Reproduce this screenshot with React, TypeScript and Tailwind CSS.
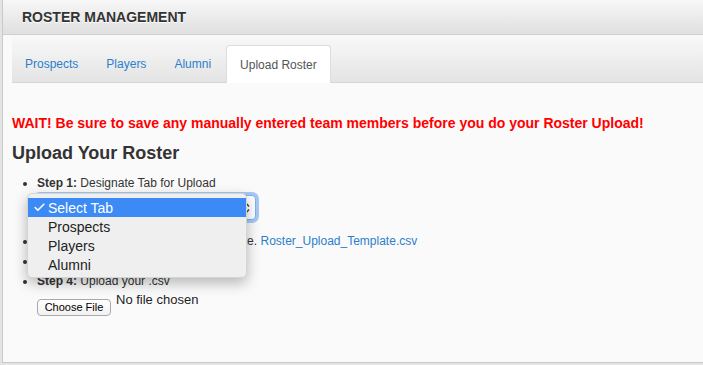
import { Check } from "lucide-react";

const tabs = ["Prospects", "Players", "Alumni", "Upload Roster"];
const options = ["Select Tab", "Prospects", "Players", "Alumni"];

function TabBar() {
  return (
    <div className="ml-[9px] flex h-[48px] items-end border-b border-[#d6d6d6] bg-gradient-to-b from-[#f9f9f9] to-[#e4e4e4] pl-0">
      {tabs.map((tab) => {
        const active = tab === "Upload Roster";
        return (
          <div
            key={tab}
            className={
              active
                ? "-mb-px mr-[2px] flex h-[38px] items-center rounded-t-[4px] border border-b-0 border-[#dddddd] bg-white px-[13px] text-[12px] text-[#555555]"
                : "mr-[2px] flex h-[37px] items-center px-[13px] text-[12px] text-[#2a7fcc]"
            }
          >
            {tab}
          </div>
        );
      })}
    </div>
  );
}

function SelectPopup() {
  return (
    <div className="relative ml-[-1px] h-[29px] w-[220px]">
      <div className="absolute inset-x-0 top-[2px] h-[25px] rounded-[4px] border border-[#7fb2f0] bg-white shadow-[0_0_0_3px_rgba(95,160,240,0.55)]">
        <svg className="absolute right-[5px] top-[6px]" width="7" height="12" viewBox="0 0 7 12">
          <path d="M1 4.5 L3.5 1.5 L6 4.5 M1 7.5 L3.5 10.5 L6 7.5" fill="none" stroke="#444" strokeWidth="1.4" />
        </svg>
      </div>
      <div className="absolute left-[-9px] top-0 z-10 w-[220px] rounded-[5px] border border-[#d4d4d4] bg-[#efefef] pb-[3px] pt-[4px] text-[14px] shadow-[0_5px_14px_rgba(0,0,0,0.28)]">
        {options.map((opt, i) => (
          <div
            key={opt}
            className={
              i === 0
                ? "flex h-[19px] items-center bg-[#3b8af5] text-white"
                : "flex h-[19px] items-center text-[#222222]"
            }
          >
            <span className="flex w-[20px] justify-end pr-[2px]">
              {i === 0 && <Check size={13} strokeWidth={3} />}
            </span>
            <span>{opt}</span>
          </div>
        ))}
      </div>
    </div>
  );
}

export default function App() {
  return (
    <div className="h-[365px] w-[703px] overflow-hidden bg-[#e4e4e4] pl-[2px] font-['Liberation_Sans',Arial,sans-serif]">
      <div className="h-[363px] border-b border-l border-[#c9c9c9] bg-[#fafafa]">
        <div className="flex h-[35px] items-center border-b border-[#cfcfcf] bg-gradient-to-b from-[#f7f7f7] to-[#e0e0e0] pl-[19px] text-[14px] font-bold text-[#333333] [text-shadow:0_1px_0_#fff]">
          ROSTER MANAGEMENT
        </div>

        <TabBar />

        <div className="pl-[9px]">
          <p className="mt-[30px] text-[14px] font-bold leading-[20px] text-[#ff0000]">
            WAIT! Be sure to save any manually entered team members before you do your Roster Upload!
          </p>
          <h2 className="mt-[9px] text-[18px] font-bold leading-[22px] text-[#333333]">
            Upload Your Roster
          </h2>

          <ul className="mt-[9px] list-disc pl-[25px] text-[12px] leading-[20px] text-[#333333]">
            <li>
              <b>Step 1:</b> Designate Tab for Upload
              <div className="mb-[9px]">
                <SelectPopup />
              </div>
            </li>
            <li>
              <b>Step 2:</b> Download and fill in the template.{" "}
              <a className="text-[#2a7fcc]">Roster_Upload_Template.csv</a>
            </li>
            <li>
              <b>Step 3:</b> Enter your team
            </li>
            <li>
              <b>Step 4:</b> Upload your .csv
              <div className="mt-px flex items-start">
                <button className="mt-[7px] h-[17px] w-[74px] rounded-[4px] border border-[#a9a9a9] bg-gradient-to-b from-white to-[#f1f1f1] text-[11px] leading-[15px] text-black">
                  Choose File
                </button>
                <span className="ml-[5px] text-[13px] leading-[16px] text-[#222222]">No file chosen</span>
              </div>
            </li>
          </ul>
        </div>
      </div>
    </div>
  );
}
